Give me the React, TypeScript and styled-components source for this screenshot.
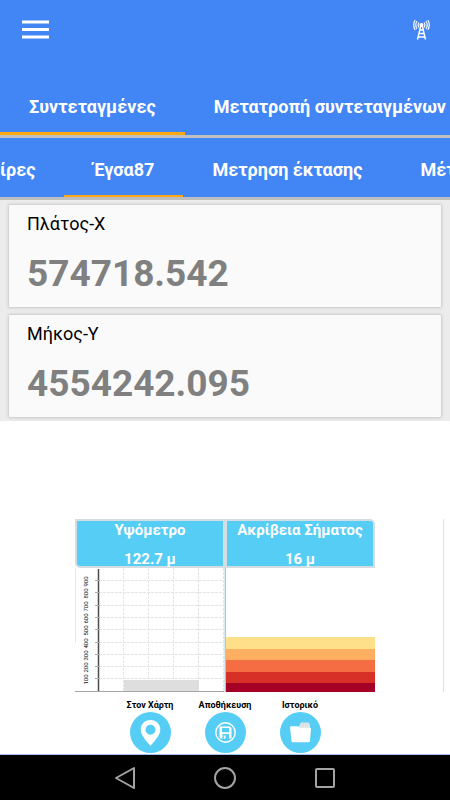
import React from 'react';
import styled, { createGlobalStyle } from 'styled-components';

const GlobalStyle = createGlobalStyle`
  *, *::before, *::after { box-sizing: border-box; }
  body {
    margin: 0;
    background: #ffffff;
    font-family: Roboto, "Noto Sans", sans-serif;
  }
  button { font: inherit; border: 0; padding: 0; background: none; cursor: pointer; }
  h2, p { margin: 0; }
  svg { display: block; }
`;

const Screen = styled.div`
  display: flex;
  flex-direction: column;
  min-height: 100vh;
  overflow: hidden;
`;

const AppBar = styled.header`
  display: flex;
  justify-content: space-between;
  align-items: center;
  height: 60px;
  padding: 0 20px 0 22px;
  background: #4285f4;
`;

const IconButton = styled.button`
  display: flex;
  color: #ffffff;
`;

const TabBar = styled.nav<{ $height: number; $top: number }>`
  display: flex;
  height: ${({ $height }) => $height}px;
  overflow: hidden;
  background: #4285f4;
  border-bottom: 3px solid #bfbfbf;

  & > button {
    padding-top: ${({ $top }) => $top}px;
  }
`;

const Tab = styled.button<{ $active?: boolean; $cut?: boolean; $line?: number }>`
  flex: none;
  padding: ${({ $cut }) => ($cut ? '0 29px 0 0' : '0 29px')};
  color: #ffffff;
  font-size: 18px;
  font-weight: 700;
  line-height: 24px;
  white-space: nowrap;
  box-shadow: ${({ $active, $line = 3 }) => ($active ? `inset 0 -${$line}px #ffa912` : 'none')};
`;

const CardList = styled.section`
  display: flex;
  flex-direction: column;
  gap: 8px;
  padding: 5px 9px 4px;
  background: #ececec;
`;

const Card = styled.article`
  height: 102px;
  padding: 7px 18px;
  background: #fafafa;
  border-radius: 1px;
  box-shadow: 0 0 3px 1px #c8c8c8;
`;

const CardTitle = styled.h2`
  color: #000000;
  font-size: 18px;
  font-weight: 400;
  line-height: 24px;
`;

const CardValue = styled.p`
  margin-top: 14px;
  color: #808080;
  font-size: 37px;
  font-weight: 700;
  line-height: 48px;
`;

const Lower = styled.main`
  display: flex;
  flex: 1;
  flex-direction: column;
  justify-content: flex-end;
`;

const GaugeRow = styled.section`
  display: grid;
  grid-template-columns: 1fr 4fr 1fr;
`;

const Gauges = styled.div`
  display: grid;
  grid-column: 2;
  grid-template-columns: 1fr 1fr;
`;

const PageEdge = styled.div`
  margin-right: 6px;
  border-right: 1px solid #e2e2e2;
`;

const Gauge = styled.div`
  display: flex;
  flex-direction: column;
`;

const GaugeHeader = styled.div<{ $corner: string }>`
  height: 49px;
  border: 2px solid #d3dde2;
  border-radius: ${({ $corner }) => $corner};
  background: #55cdf4;
  color: #ffffff;
  font-size: 15px;
  font-weight: 700;
  text-align: center;
  white-space: nowrap;
`;

const GaugeName = styled.p`
  line-height: 18px;
`;

const GaugeValue = styled.p`
  margin-top: 10px;
  line-height: 20px;
`;

const ChartSvg = styled.svg`
  width: 100%;
  height: 124px;
`;

const Bands = styled.div`
  display: flex;
  flex-direction: column;
  justify-content: flex-end;
  height: 124px;
  border-left: 1px solid #7bdcf8;
`;

const Band = styled.div<{ $color: string; $height: number }>`
  height: ${({ $height }) => $height}px;
  background: ${({ $color }) => $color};
`;

const Actions = styled.div`
  display: grid;
  grid-template-columns: repeat(3, 1fr);
  width: 50%;
  margin: 0 auto;
  padding: 7px 0 1px;
`;

const Action = styled.button`
  display: flex;
  flex-direction: column;
  align-items: center;
  color: #000000;
  font-size: 9px;
  font-weight: 700;
  line-height: 13px;
  white-space: nowrap;
`;

const SystemBar = styled.footer`
  display: flex;
  justify-content: center;
  align-items: center;
  gap: 76px;
  height: 46px;
  border-top: 1px solid #a9bdf0;
  background: #000000;
`;

const MenuIcon = () => (
  <svg width="27" height="20" viewBox="0 0 27 20" aria-hidden="true">
    <path d="M0 2h27M0 9.5h27M0 17h27" stroke="#fff" strokeWidth="3" />
  </svg>
);

const TowerIcon = () => (
  <svg width="17" height="22" viewBox="0 0 17 22" fill="none" stroke="#fff" aria-hidden="true">
    <circle cx="8.5" cy="6" r="2" fill="#fff" stroke="none" />
    <path d="M7.7 7L4.5 20.5M9.3 7l3.2 13.5M6.8 11h3.4M6 14.5h5M5.2 18h6.6" strokeWidth="1.4" />
    <path d="M2.2 1C.2 3.5.2 8 2.2 11M14.8 1c2 2.5 2 7 0 10M4 2C2.4 4 2.4 8 4 10M13 2c1.6 2 1.6 6 0 8M5.8 3.5c-.9 1.5-.9 3.5 0 5M11.2 3.5c.9 1.5.9 3.5 0 5" strokeWidth="1.2" />
  </svg>
);

const levels = [900, 800, 700, 600, 500, 400, 300, 200, 100];
const columns = [48, 73, 98, 123, 148];

const AltitudeChart = () => (
  <ChartSvg viewBox="0 0 150 124" role="img" aria-label="Υψόμετρο">
    <path d="M.5 0v75" stroke="#e6e6e6" />
    <g stroke="#e4e4e4" strokeDasharray="3 1">
      {columns.map((x) => (
        <path key={x} d={`M${x + 0.5} 0v123`} />
      ))}
      {levels.map((level, i) => (
        <path key={level} d={`M24 ${12.5 + Math.round(i * 12.3)}h125`} />
      ))}
    </g>
    <rect x="49" y="112" width="75" height="11" fill="#dedede" />
    <path d="M23.5 1v122" stroke="#4b4b4b" strokeWidth="1.5" />
    {levels.map((level, i) => {
      const y = 12.5 + Math.round(i * 12.3);
      return (
        <g key={level}>
          <path d={`M20 ${y}h4`} stroke="#aaa" />
          <text
            transform={`translate(13 ${y + 1}) rotate(-90)`}
            textAnchor="middle"
            fontFamily="Roboto, sans-serif"
            fontSize="6"
            fill="#111"
          >
            {level}
          </text>
        </g>
      );
    })}
    <path d="M0 123.5h149" stroke="#a5a5a5" />
    <path d="M149.5 0v124" stroke="#d5e9f0" />
  </ChartSvg>
);

const PinIcon = () => (
  <svg width="41" height="41" viewBox="0 0 41 41" aria-hidden="true">
    <circle cx="20.5" cy="20.5" r="20.5" fill="#55cdf4" />
    <path
      fillRule="evenodd"
      d="M20.5 8c-5.6 0-9.8 4.2-9.8 9.5 0 6.4 7.2 13 9.8 16.5 2.6-3.5 9.8-10.1 9.8-16.5C30.3 12.2 26.1 8 20.5 8zm0 4.8a5 5 0 1 1 0 10 5 5 0 0 1 0-10z"
      fill="#fff"
    />
  </svg>
);

const SaveIcon = () => (
  <svg width="41" height="41" viewBox="0 0 41 41" aria-hidden="true">
    <circle cx="20.5" cy="20.5" r="20.5" fill="#55cdf4" />
    <circle cx="20.5" cy="20.5" r="9.7" fill="none" stroke="#fff" strokeWidth="1.4" />
    <path
      fillRule="evenodd"
      d="M14.5 14.5h10.3l1.7 1.7v10.3h-12zM17 16v4.2h7.2V16zM17.5 22v4.5h1.3v-3h1.7v3h3.5V22z"
      fill="#fff"
    />
  </svg>
);

const FolderIcon = () => (
  <svg width="41" height="41" viewBox="0 0 41 41" aria-hidden="true">
    <circle cx="20.5" cy="20.5" r="20.5" fill="#55cdf4" />
    <path d="M19 14l2-3.5h7.5l1.5 2V17H19z" fill="#dfe3e5" />
    <path
      d="M11 14.3h6.8l2 1.5H30q1.2 0 1 1.2l-1.1 12.3q-.1 1-1.1 1H12.7q-1 0-1.1-1L10 15.5q-.1-1.2 1-1.2z"
      fill="#fff"
    />
  </svg>
);

const bands = [
  { color: '#fee08b', height: 12 },
  { color: '#fdae61', height: 11 },
  { color: '#f46d43', height: 12 },
  { color: '#d73027', height: 11 },
  { color: '#a50026', height: 9 },
];

const readings = [
  { title: 'Πλάτος-Χ', value: '574718.542' },
  { title: 'Μήκος-Υ', value: '4554242.095' },
];

const actions = [
  { label: 'Στον Χάρτη', Icon: PinIcon },
  { label: 'Αποθήκευση', Icon: SaveIcon },
  { label: 'Ιστορικό', Icon: FolderIcon },
];

export default function App() {
  return (
    <Screen>
      <GlobalStyle />
      <AppBar>
        <IconButton aria-label="Μενού">
          <MenuIcon />
        </IconButton>
        <IconButton aria-label="Σήμα">
          <TowerIcon />
        </IconButton>
      </AppBar>
      <TabBar $height={78} $top={18}>
        <Tab $active>Συντεταγμένες</Tab>
        <Tab>Μετατροπή συντεταγμένων</Tab>
      </TabBar>
      <TabBar $height={62} $top={4}>
        <Tab $cut>ίρες</Tab>
        <Tab $active $line={2}>Έγσα87</Tab>
        <Tab>Μετρηση έκτασης</Tab>
        <Tab>Μέτ</Tab>
      </TabBar>
      <CardList>
        {readings.map(({ title, value }) => (
          <Card key={title}>
            <CardTitle>{title}</CardTitle>
            <CardValue>{value}</CardValue>
          </Card>
        ))}
      </CardList>
      <Lower>
        <GaugeRow>
          <Gauges>
            <Gauge>
              <GaugeHeader $corner="0 0 0 5px">
                <GaugeName>Υψόμετρο</GaugeName>
                <GaugeValue>122.7 μ</GaugeValue>
              </GaugeHeader>
              <AltitudeChart />
            </Gauge>
            <Gauge>
              <GaugeHeader $corner="0 5px 0 0">
                <GaugeName>Ακρίβεια Σήματος</GaugeName>
                <GaugeValue>16 μ</GaugeValue>
              </GaugeHeader>
              <Bands>
                {bands.map(({ color, height }) => (
                  <Band key={color} $color={color} $height={height} />
                ))}
              </Bands>
            </Gauge>
          </Gauges>
          <PageEdge />
        </GaugeRow>
        <Actions>
          {actions.map(({ label, Icon }) => (
            <Action key={label}>
              {label}
              <Icon />
            </Action>
          ))}
        </Actions>
      </Lower>
      <SystemBar>
        <IconButton aria-label="Πίσω">
          <svg width="24" height="24" viewBox="0 0 24 24" fill="none" stroke="#a3a3a3" strokeWidth="2" strokeLinejoin="round">
            <path d="M21 2v20L3 12z" />
          </svg>
        </IconButton>
        <IconButton aria-label="Αρχική">
          <svg width="24" height="24" viewBox="0 0 24 24" fill="none" stroke="#a3a3a3" strokeWidth="2">
            <circle cx="12" cy="12" r="10" />
          </svg>
        </IconButton>
        <IconButton aria-label="Πρόσφατα">
          <svg width="24" height="24" viewBox="0 0 24 24" fill="none" stroke="#a3a3a3" strokeWidth="2">
            <rect x="3" y="3" width="18" height="18" rx="1" />
          </svg>
        </IconButton>
      </SystemBar>
    </Screen>
  );
}
